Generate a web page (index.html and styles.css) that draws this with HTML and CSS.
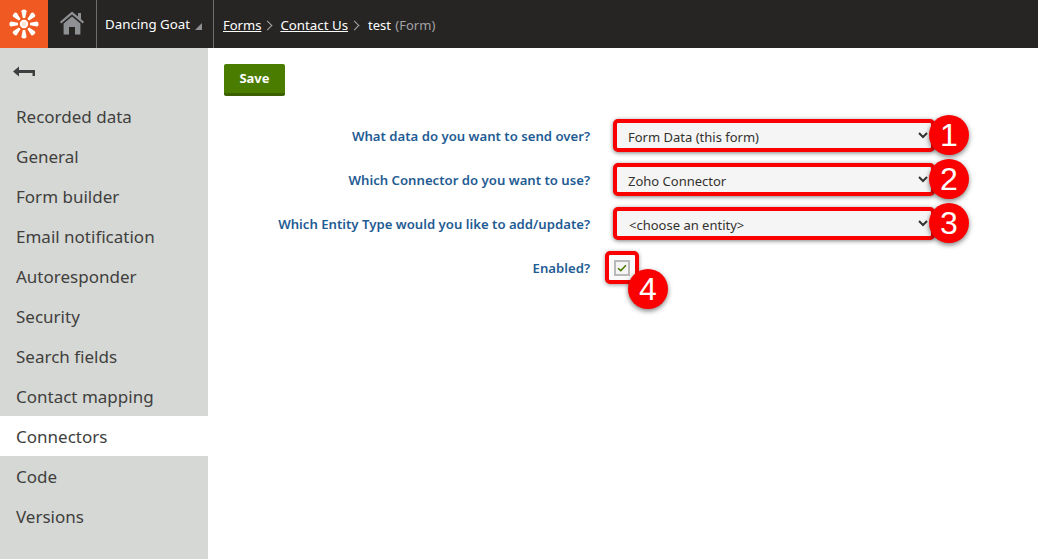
FILE: index.html
```html
<!DOCTYPE html>
<html lang="en">
<head>
<meta charset="utf-8">
<title>test (Form)</title>
<link rel="stylesheet" href="styles.css">
</head>
<body>
<header class="topbar">
  <a class="logo" href="#" aria-label="Kentico">
    <svg width="30" height="30" viewBox="0 0 30 30">
      <g fill="#fff">
        <circle cx="15" cy="15" r="3.4" fill="#fde3d8" stroke="#fff" stroke-width="1.6"/>
        <path d="M12.4 2.2 Q12.4 0.4 15 0.4 Q17.6 0.4 17.6 2.2 L16.2 9 h-2.4z"/>
        <path d="M12.4 2.2 Q12.4 0.4 15 0.4 Q17.6 0.4 17.6 2.2 L16.2 9 h-2.4z" transform="rotate(45 15 15)"/>
        <path d="M12.4 2.2 Q12.4 0.4 15 0.4 Q17.6 0.4 17.6 2.2 L16.2 9 h-2.4z" transform="rotate(90 15 15)"/>
        <path d="M12.4 2.2 Q12.4 0.4 15 0.4 Q17.6 0.4 17.6 2.2 L16.2 9 h-2.4z" transform="rotate(135 15 15)"/>
        <path d="M12.4 2.2 Q12.4 0.4 15 0.4 Q17.6 0.4 17.6 2.2 L16.2 9 h-2.4z" transform="rotate(180 15 15)"/>
        <path d="M12.4 2.2 Q12.4 0.4 15 0.4 Q17.6 0.4 17.6 2.2 L16.2 9 h-2.4z" transform="rotate(225 15 15)"/>
        <path d="M12.4 2.2 Q12.4 0.4 15 0.4 Q17.6 0.4 17.6 2.2 L16.2 9 h-2.4z" transform="rotate(270 15 15)"/>
        <path d="M12.4 2.2 Q12.4 0.4 15 0.4 Q17.6 0.4 17.6 2.2 L16.2 9 h-2.4z" transform="rotate(315 15 15)"/>
      </g>
    </svg>
  </a>
  <a class="home" href="#" aria-label="Home">
    <svg width="24" height="24" viewBox="0 0 24 24">
      <path fill="#8f9093" d="M12 0.5 L18 5.6 V2 H21 V8.2 L24 10.8 L22.8 12.4 L12 3.4 L1.2 12.4 L0 10.8Z"/>
      <path fill="#8f9093" d="M12 5.6 L20.4 12.6 V23.5 H15 V16 H9 V23.5 H3.6 V12.6Z"/>
    </svg>
  </a>
  <div class="site">Dancing Goat<span class="site-caret"></span></div>
  <nav class="crumbs">
    <a href="#">Forms</a><span class="sep"></span><a class="crumb-wide" href="#">Contact Us</a><span class="sep"></span><span class="current">test <span class="kind">(Form)</span></span>
  </nav>
</header>
<div class="main">
  <aside class="sidebar">
    <div class="back">
      <svg width="22" height="12" viewBox="0 0 22 12">
        <path fill="#3e3e40" d="M0 5.5 L6 0.5 V4 H22 V10 H19.5 V7 H6 V10.5Z"/>
      </svg>
    </div>
    <ul class="menu">
      <li>Recorded data</li>
      <li>General</li>
      <li>Form builder</li>
      <li>Email notification</li>
      <li>Autoresponder</li>
      <li>Security</li>
      <li>Search fields</li>
      <li>Contact mapping</li>
      <li class="active">Connectors</li>
      <li>Code</li>
      <li>Versions</li>
    </ul>
  </aside>
  <main class="content">
    <button class="save" type="button">Save</button>
    <form class="form">
      <label class="label">What data do you want to send over?</label>
      <div class="control">
        <select class="select"><option>Form Data (this form)</option></select>
        <span class="badge">1</span>
      </div>
      <label class="label">Which Connector do you want to use?</label>
      <div class="control">
        <select class="select"><option>Zoho Connector</option></select>
        <span class="badge">2</span>
      </div>
      <label class="label">Which Entity Type would you like to add/update?</label>
      <div class="control">
        <select class="select select-wide"><option>&lt;choose an entity&gt;</option></select>
        <span class="badge">3</span>
      </div>
      <label class="label">Enabled?</label>
      <div class="control">
        <span class="check-mark">
          <span class="check">
            <svg width="10" height="10" viewBox="0 0 10 10"><path d="M1 5.2 L3.8 7.6 L9 2.2" fill="none" stroke="#4a7c00" stroke-width="1.5"/></svg>
          </span>
        </span>
        <span class="badge badge-low">4</span>
      </div>
    </form>
  </main>
</div>
</body>
</html>
```

FILE: styles.css
```css
* { box-sizing: border-box; }
html, body { margin: 0; height: 100%; overflow: hidden; }
body {
  font-family: "Noto Sans", "Open Sans", sans-serif;
  background: #fff;
  color: #262524;
  display: flex;
  flex-direction: column;
}
.topbar {
  display: flex;
  align-items: stretch;
  height: 48px;
  flex: none;
  background: #262524;
  color: #fff;
  font-size: 13px;
}
.logo {
  width: 48px;
  background: #f05a22;
  display: flex;
  align-items: center;
  justify-content: center;
}
.home {
  width: 49px;
  display: flex;
  align-items: center;
  justify-content: center;
  border-right: 1px solid #6d6d6d;
  padding-bottom: 2px;
}
.site {
  width: 117px;
  border-right: 1px solid #6d6d6d;
  display: flex;
  align-items: center;
  padding: 0 0 1px 8px;
  font-size: 13.3px;
  white-space: nowrap;
}
.site-caret {
  width: 0;
  height: 0;
  margin: 5px 0 0 5px;
  border-style: solid;
  border-width: 0 0 7px 7px;
  border-color: transparent transparent #8f9093 transparent;
}
.crumbs {
  display: flex;
  align-items: center;
  padding: 2px 0 0 9px;
  white-space: pre;
}
.crumbs a { color: #fff; }
.crumb-wide { font-size: 13.3px; }
.sep {
  width: 7px;
  height: 7px;
  margin: 0 9px 0 3px;
  border-top: 1px solid #a8a8a8;
  border-right: 1px solid #a8a8a8;
  transform: rotate(45deg);
}
.current { margin-left: 1px; }
.kind { color: #a3a3a3; margin-left: 1px; }
.main { flex: 1; display: flex; min-height: 0; }
.sidebar {
  width: 208px;
  flex: none;
  background: #d6d8d5;
}
.back {
  height: 48px;
  padding: 18px 0 0 13px;
}
.back svg { display: block; }
.menu { list-style: none; margin: 0; padding: 0; }
.menu li {
  height: 40px;
  line-height: 41px;
  padding-left: 16px;
  font-size: 17px;
  color: #403f3d;
}
.menu .active { background: #fff; }
.content { flex: 1; padding: 16px 0 0 16px; }
.save {
  display: block;
  width: 61px;
  height: 32px;
  padding: 0 0 2px;
  border: 0;
  border-bottom: 3px solid #3a6000;
  border-radius: 2px;
  background: #4a7c00;
  color: #fff;
  font: 700 13px "Noto Sans", "Open Sans", sans-serif;
}
.form {
  display: grid;
  grid-template-columns: 366px 322px;
  grid-auto-rows: 44px;
  column-gap: 23px;
  margin-top: 23px;
}
.label {
  font-size: 13.17px;
  font-weight: 600;
  color: #1f5c94;
  text-align: right;
  white-space: nowrap;
  line-height: 35px;
}
.control { position: relative; height: 33px; }
.select {
  display: block;
  width: 100%;
  height: 33px;
  padding: 2px 0 0 7px;
  border: 4px solid #fa0000;
  border-radius: 5px;
  background-color: #f5f5f5;
  box-shadow: 0 1px 4px rgba(0, 0, 0, .5);
  font: 13px "Noto Sans", "Open Sans", sans-serif;
  color: #33322f;
}
.select-wide { padding-left: 8px; }
.badge {
  position: absolute;
  left: 316px;
  top: -4px;
  width: 40px;
  height: 40px;
  border-radius: 50%;
  background: #fa0000;
  box-shadow: 0 2px 5px rgba(0, 0, 0, .5);
  color: #fff;
  font: 32px/40px "Liberation Sans", Arial, sans-serif;
  text-align: center;
}
.badge-low { left: 15px; top: 18px; }
.check-mark {
  position: absolute;
  left: -8px;
  top: 0;
  width: 34px;
  height: 33px;
  border: 4px solid #fa0000;
  border-radius: 5px;
  box-shadow: 0 1px 4px rgba(0, 0, 0, .4);
  display: flex;
  align-items: center;
  justify-content: center;
  background: #fafafa;
}
.check {
  width: 16px;
  height: 16px;
  border: 2px solid #b9b9b9;
  background: #f5f5f5;
  display: flex;
  align-items: center;
  justify-content: center;
}
.check svg { display: block; }
```
